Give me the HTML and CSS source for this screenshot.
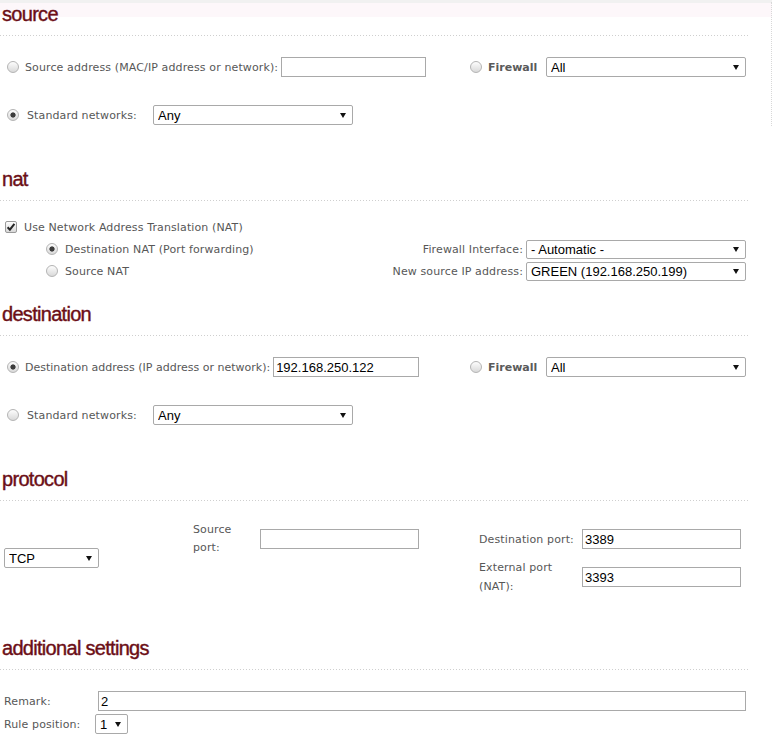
FILE: index.html
```html
<!DOCTYPE html>
<html>
<head>
<meta charset="utf-8">
<title>Port forwarding rule</title>
<link rel="stylesheet" href="styles.css">
</head>
<body>
<div class="page">

  <section class="sec sec-source">
    <h2 class="sec-title">source</h2>
    <div class="rule"></div>
    <div class="row row-first">
      <div class="cell-main">
        <span class="radio"></span>
        <span class="lbl lbl-addr">Source address (MAC/IP address or network):</span>
        <input class="txt w145" type="text" value="">
      </div>
      <div class="cell-fw">
        <span class="radio"></span>
        <span class="lbl lbl-bold lbl-fw">Firewall</span>
        <label class="sel w200"><select><option>All</option></select></label>
      </div>
    </div>
    <div class="row row-next">
      <div class="cell-main">
        <span class="radio on"></span>
        <span class="lbl lbl-std">Standard networks:</span>
        <label class="sel w200"><select><option>Any</option></select></label>
      </div>
    </div>
  </section>

  <section class="sec sec-nat">
    <h2 class="sec-title">nat</h2>
    <div class="rule"></div>
    <div class="check-row">
      <svg class="checkbox" width="12" height="12" viewBox="0 0 12 12">
        <defs>
          <linearGradient id="cbg" x1="0" y1="0" x2="0" y2="1">
            <stop offset="0" stop-color="#ffffff"/>
            <stop offset="1" stop-color="#d6d6d6"/>
          </linearGradient>
        </defs>
        <rect x="0.5" y="0.5" width="11" height="11" rx="1.5" fill="url(#cbg)" stroke="#9a9a9a"/>
        <path d="M2.6 6.2 L4.9 8.6 L9.4 2.8" fill="none" stroke="#262626" stroke-width="2"/>
      </svg>
      <span class="lbl">Use Network Address Translation (NAT)</span>
    </div>
    <div class="nat-grid">
      <div class="nat-opt">
        <span class="radio on"></span>
        <span class="lbl">Destination NAT (Port forwarding)</span>
      </div>
      <span class="lbl nat-lbl">Firewall Interface:</span>
      <label class="sel sel-19"><select><option>- Automatic -</option></select></label>

      <div class="nat-opt">
        <span class="radio"></span>
        <span class="lbl">Source NAT</span>
      </div>
      <span class="lbl nat-lbl">New source IP address:</span>
      <label class="sel sel-19"><select><option>GREEN (192.168.250.199)</option></select></label>
    </div>
  </section>

  <section class="sec sec-dest">
    <h2 class="sec-title">destination</h2>
    <div class="rule"></div>
    <div class="row row-first">
      <div class="cell-main">
        <span class="radio on"></span>
        <span class="lbl lbl-addr lbl-dest">Destination address (IP address or network):</span>
        <input class="txt w146" type="text" value="192.168.250.122">
      </div>
      <div class="cell-fw">
        <span class="radio"></span>
        <span class="lbl lbl-bold lbl-fw">Firewall</span>
        <label class="sel w200"><select><option>All</option></select></label>
      </div>
    </div>
    <div class="row row-next">
      <div class="cell-main">
        <span class="radio"></span>
        <span class="lbl lbl-std">Standard networks:</span>
        <label class="sel w200"><select><option>Any</option></select></label>
      </div>
    </div>
  </section>

  <section class="sec sec-proto">
    <h2 class="sec-title">protocol</h2>
    <div class="rule"></div>
    <div class="proto-grid">
      <label class="sel w95 proto-sel"><select><option>TCP</option></select></label>
      <span class="lbl lbl-wrap">Source port:</span>
      <input class="txt" type="text" value="">
      <span class="spacer"></span>
      <span class="lbl lbl-wrap2">Destination port:</span>
      <input class="txt" type="text" value="3389">

      <span class="lbl lbl-wrap2 ext-lbl">External port (NAT):</span>
      <input class="txt ext-in" type="text" value="3393">
    </div>
  </section>

  <section class="sec sec-add">
    <h2 class="sec-title">additional settings</h2>
    <div class="rule"></div>
    <div class="add-grid">
      <span class="lbl">Remark:</span>
      <input class="txt remark" type="text" value="2">
      <span class="lbl">Rule position:</span>
      <label class="sel w33"><select><option>1</option></select></label>
    </div>
  </section>

</div>
</body>
</html>
```

FILE: styles.css
```css
* { box-sizing: border-box; }

html, body { margin: 0; padding: 0; background: #fff; }

body {
  font-family: "DejaVu Sans", "Liberation Sans", sans-serif;
  font-size: 11px;
  letter-spacing: 0.12px;
  color: #575757;
  overflow: hidden;
}

.page {
  width: 772px;
  padding-top: 2px;
  background: linear-gradient(#f1f1f1 0, #f1f1f1 3px, #fdf7fa 3px, #fdf7fa 17px) no-repeat;
  background-size: 100% 17px;
}

.sec { width: 748px; }

.sec-source {
  border-right: 1px dotted #d8d8d8;
  width: 772px;
}
.sec-source .rule { width: 748px; }

.sec-nat { margin-top: 41px; }
.sec-dest { margin-top: 20px; }
.sec-proto { margin-top: 41px; }
.sec-add { margin-top: 40px; }

.sec-title {
  margin: 0;
  padding: 0 0 9px 2px;
  font-family: "Liberation Sans", sans-serif;
  font-weight: normal;
  font-size: 20px;
  line-height: 24px;
  letter-spacing: -0.7px;
  color: #6b0e16;
  -webkit-text-stroke: 0.4px #6b0e16;
}

.rule {
  height: 1px;
  background: repeating-linear-gradient(to right, #cfcfcf 0, #cfcfcf 1px, transparent 1px, transparent 3px);
}

.lbl { white-space: nowrap; }
.lbl-bold { font-weight: bold; color: #5a5a5a; letter-spacing: 0; }
.lbl-dest { letter-spacing: 0; }

/* radio buttons */
.radio {
  flex: 0 0 12px;
  width: 12px;
  height: 12px;
  border-radius: 50%;
  border: 1px solid #b4b4b4;
  background: linear-gradient(#fdfdfd, #d9d9d9);
}
.radio.on {
  background:
    radial-gradient(circle at 50% 50%, #3c3c3c 0, #3c3c3c 2.2px, rgba(60,60,60,0) 3px),
    linear-gradient(#fdfdfd, #d9d9d9);
}

/* text inputs */
.txt {
  height: 20px;
  margin: 0;
  padding: 0 2px;
  border: 1px solid #a9a9a9;
  border-radius: 0;
  background: #fff;
  font-family: "Liberation Sans", Arial, sans-serif;
  font-size: 13px;
  letter-spacing: 0;
  color: #000;
  outline: none;
}
.w145 { width: 145px; }
.w146 { width: 146px; }

/* selects */
.sel {
  position: relative;
  display: block;
  height: 20px;
}
.sel select {
  display: block;
  width: 100%;
  height: 100%;
  margin: 0;
  padding: 0 0 0 4px;
  border: 1px solid #a9a9a9;
  border-radius: 2px;
  background: #fff;
  -webkit-appearance: none;
  appearance: none;
  font-family: "Liberation Sans", Arial, sans-serif;
  font-size: 13px;
  letter-spacing: 0;
  color: #000;
  outline: none;
}
.sel::after {
  content: "";
  position: absolute;
  right: 7px;
  top: 8px;
  border-left: 3px solid transparent;
  border-right: 3px solid transparent;
  border-top: 5px solid #111;
}
.sel-19 { height: 19px; }
.sel-19::after { top: 7px; }
.w200 { width: 200px; flex: 0 0 200px; }
.w95 { width: 95px; }
.w33 { width: 33px; }

/* source / destination rows */
.row {
  display: flex;
  align-items: center;
  height: 22px;
}
.row-first { margin-top: 20px; }
.row-next { margin-top: 26px; }

.cell-main {
  display: flex;
  align-items: center;
  width: 470px;
  padding-left: 7px;
}
.cell-main .lbl-addr { margin-left: 6px; margin-right: 3px; }
.cell-main .lbl-std { margin-left: 8px; width: 126px; }

.cell-fw {
  display: flex;
  align-items: center;
}
.lbl-fw { margin-left: 6px; width: 58px; }

/* nat */
.check-row {
  display: flex;
  align-items: center;
  height: 22px;
  margin-top: 15px;
  padding-left: 5px;
}
.checkbox { display: block; flex: 0 0 12px; margin-right: 7px; }

.nat-grid {
  display: grid;
  width: 746px;
  grid-template-columns: 1fr auto 220px;
  grid-auto-rows: 22px;
  column-gap: 3px;
  align-items: center;
}
.nat-opt {
  display: flex;
  align-items: center;
  padding-left: 46px;
}
.nat-opt .lbl { margin-left: 7px; }
.nat-lbl { text-align: right; }

/* protocol */
.proto-grid {
  display: grid;
  margin-top: 19px;
  padding-left: 4px;
  grid-template-columns: 189px 67px 159px 60px 103px 159px;
  grid-template-rows: 38px 38px;
  align-items: center;
}
.proto-sel { grid-row: 1 / span 2; grid-column: 1; }
.lbl-wrap { white-space: normal; line-height: 18px; max-width: 60px; }
.lbl-wrap2 { white-space: normal; line-height: 19px; }
.proto-grid .txt { width: 159px; }
.ext-lbl { grid-row: 2; grid-column: 5; }
.ext-in { grid-row: 2; grid-column: 6; }

/* additional settings */
.add-grid {
  display: grid;
  margin-top: 20px;
  padding-left: 4px;
  grid-template-columns: 91px 651px;
  grid-auto-rows: 22px;
  row-gap: 1px;
  align-items: center;
}
.remark { width: 648px; margin-left: 3px; }
```
